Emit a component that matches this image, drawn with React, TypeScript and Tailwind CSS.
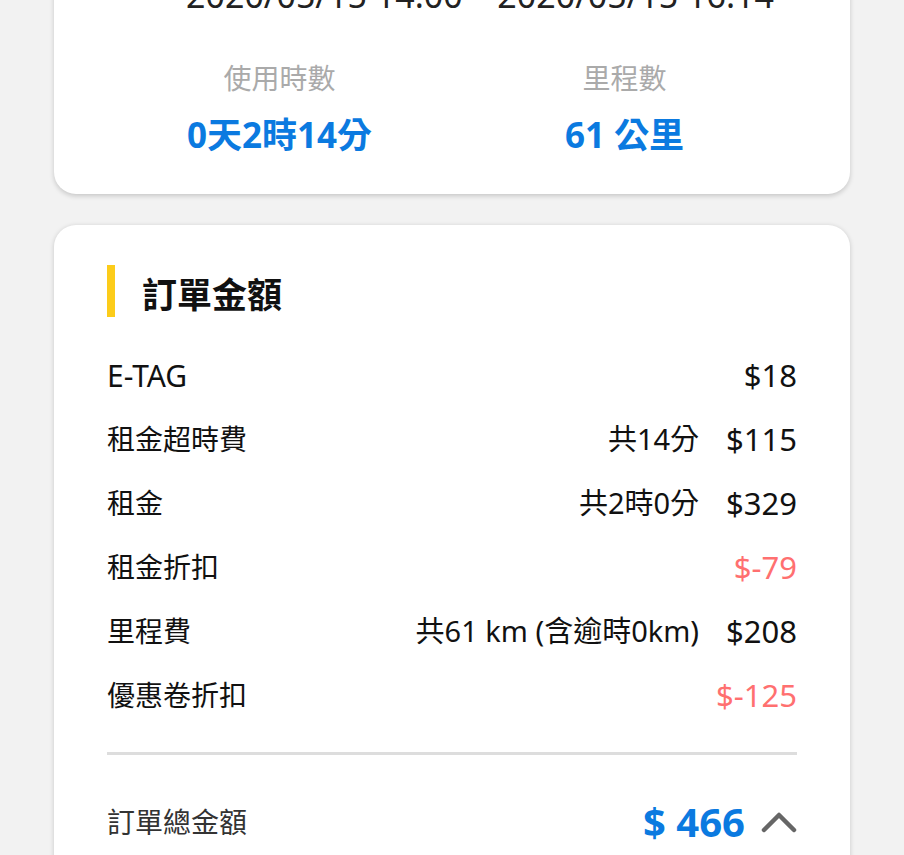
const rows = [
  { label: 'E-TAG', note: '', amount: '$18', discount: false },
  { label: '租金超時費', note: '共14分', amount: '$115', discount: false },
  { label: '租金', note: '共2時0分', amount: '$329', discount: false },
  { label: '租金折扣', note: '', amount: '$-79', discount: true },
  { label: '里程費', note: '共61 km (含逾時0km)', amount: '$208', discount: false },
  { label: '優惠卷折扣', note: '', amount: '$-125', discount: true },
];

export default function App() {
  return (
    <div
      className="min-h-screen bg-[#f2f2f2] px-[54px] overflow-hidden"
      style={{ fontFamily: '"Noto Sans", "Noto Sans CJK TC", sans-serif' }}
    >
      {/* Usage summary card (scrolled partly out of view) */}
      <div className="mt-[-31px] bg-white rounded-b-[22px] shadow-[0_2px_5px_rgba(0,0,0,0.18)] px-[53px] pb-[38px]">
        <div className="h-[46px] pl-[56px] flex items-end justify-center text-[34px] leading-[40px] text-[#222] whitespace-nowrap">
          2020/05/15 14:00 – 2020/05/15 16:14
        </div>
        <div className="grid grid-cols-2 mt-[43px]">
          <div className="flex flex-col items-center">
            <span className="text-[28px] leading-[40px] text-[#aaaaaa]">使用時數</span>
            <span className="mt-[16px] text-[35px] leading-[42px] font-bold text-[#0b7ae0]">0天2時14分</span>
          </div>
          <div className="flex flex-col items-center">
            <span className="text-[28px] leading-[40px] text-[#aaaaaa]">里程數</span>
            <span className="mt-[16px] text-[35px] leading-[42px] font-bold text-[#0b7ae0]">61 公里</span>
          </div>
        </div>
      </div>

      {/* Order amount card */}
      <div className="mt-[31px] bg-white rounded-[22px] shadow-[0_1px_5px_rgba(0,0,0,0.18)] px-[53px] pt-[40px] pb-[40px]">
        <div className="flex items-center h-[52px]">
          <div className="w-[8px] h-[52px] bg-[#fccc1a]" />
          <h2 className="ml-[27px] mt-[8px] text-[35px] leading-[52px] font-bold text-[#111]">訂單金額</h2>
        </div>

        <div className="mt-[26px]">
          {rows.map((row) => (
            <div key={row.label} className="flex items-center justify-between h-16 text-[28px] text-[#111]">
              <span className={row.label === 'E-TAG' ? 'text-[30px]' : ''}>{row.label}</span>
              <div className="flex items-center">
                {row.note && <span className="mr-[27px] text-[29px]">{row.note}</span>}
                <span className={row.discount ? 'text-[31px] text-[#ff7070]' : 'text-[31px]'}>{row.amount}</span>
              </div>
            </div>
          ))}
        </div>

        <div className="mt-[25px] h-[3px] bg-[#dddddd]" />

        <div className="flex items-center justify-between mt-[35px] h-16">
          <span className="text-[28px] text-[#333]">訂單總金額</span>
          <div className="flex items-center">
            <span className="text-[40px] font-bold text-[#0b7ae0]">$ 466</span>
            <svg className="ml-[16px]" width="36" height="24" viewBox="0 0 36 24" fill="none">
              <polyline
                points="3,20 18,5 33,20"
                stroke="#666666"
                strokeWidth="4.5"
                strokeLinecap="round"
                strokeLinejoin="round"
              />
            </svg>
          </div>
        </div>
      </div>
    </div>
  );
}
